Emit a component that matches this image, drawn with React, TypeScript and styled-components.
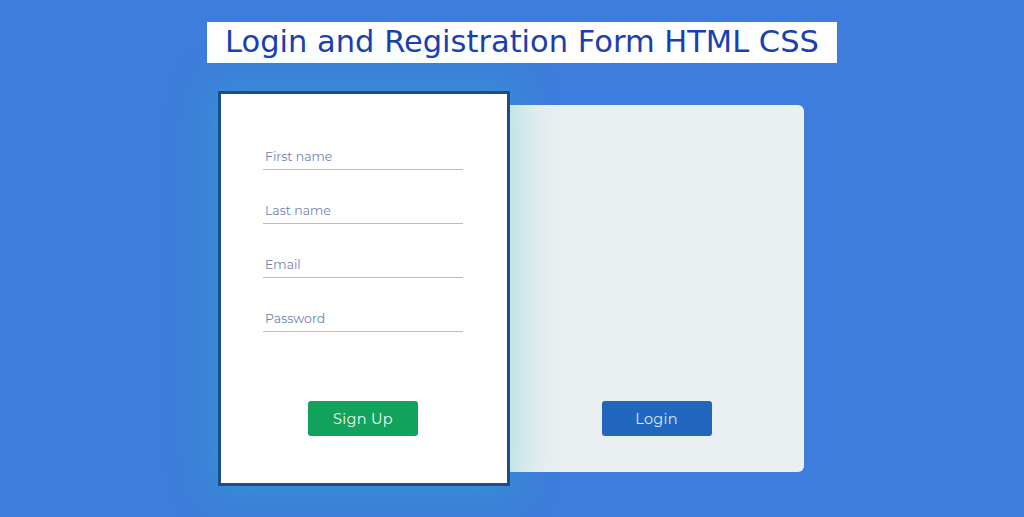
import React from "react";
import styled, { createGlobalStyle } from "styled-components";

const Global = createGlobalStyle`
  html, body { margin: 0; padding: 0; height: 100%; }
  body { background: #3d7ddb; font-family: "Montserrat", "Open Sans", sans-serif; }
  #root { height: 100%; }
`;

const Page = styled.div`
  height: 517px;
  display: flex;
  flex-direction: column;
  align-items: center;
  background: #3d7ddb;
  overflow: hidden;
`;

const TitleBox = styled.div`
  margin-top: 22px;
  margin-left: 20px;
  width: 630px;
  height: 41px;
  background: #ffffff;
  display: flex;
  align-items: center;
  justify-content: center;
  box-sizing: border-box;
`;

const Title = styled.h1`
  margin: 0;
  font-family: "DejaVu Sans", Verdana, sans-serif;
  font-weight: 400;
  font-size: 30.5px;
  line-height: 1;
  color: #1b3fae;
  white-space: nowrap;
  padding-bottom: 1px;
`;

const Stage = styled.div`
  margin-top: 28px;
  margin-left: -2px;
  display: flex;
  align-items: center;
  justify-content: center;
  width: 100%;
`;

const SignupCard = styled.form`
  position: relative;
  z-index: 2;
  width: 292px;
  height: 395px;
  box-sizing: border-box;
  background: #ffffff;
  border: 3px solid #1c4c8c;
  box-shadow: 0 0 40px 8px rgba(40, 190, 195, 0.32);
  display: flex;
  flex-direction: column;
  align-items: center;
  padding-top: 46px;
  padding-bottom: 47px;
  padding-right: 2px;
`;

const Fields = styled.div`
  display: flex;
  flex-direction: column;
  gap: 24px;
  width: 200px;
`;

const Field = styled.div`
  height: 30px;
  border-bottom: 1px solid #b9bcc4;
  display: flex;
  align-items: flex-end;
  padding-left: 2px;
  padding-bottom: 5px;
  box-sizing: border-box;
  font-size: 12.5px;
  color: #6f7fb3;
`;

const Spacer = styled.div`
  flex: 1;
`;

const Button = styled.button<{ $variant: "green" | "blue" }>`
  width: 110px;
  height: 35px;
  border: none;
  border-radius: 3px;
  font-family: "Montserrat", "Open Sans", sans-serif;
  font-size: 14.5px;
  letter-spacing: 0.3px;
  cursor: pointer;
  background: ${(p) => (p.$variant === "green" ? "#11a35b" : "#2167c0")};
  color: ${(p) => (p.$variant === "green" ? "#f2fbf5" : "#dbe7f7")};
`;

const LoginPanel = styled.div`
  position: relative;
  z-index: 1;
  margin-left: -5px;
  width: 299px;
  height: 367px;
  box-sizing: border-box;
  background: #eaeff1;
  border-radius: 0 6px 6px 0;
  display: flex;
  flex-direction: column;
  align-items: center;
  justify-content: flex-end;
  padding-bottom: 36px;
  padding-left: 4px;
`;

export default function App() {
  return (
    <>
      <Global />
      <Page>
        <TitleBox>
          <Title>Login and Registration Form HTML CSS</Title>
        </TitleBox>
        <Stage>
          <SignupCard onSubmit={(e) => e.preventDefault()}>
            <Fields>
              <Field>First name</Field>
              <Field>Last name</Field>
              <Field>Email</Field>
              <Field>Password</Field>
            </Fields>
            <Spacer />
            <Button type="button" $variant="green">Sign Up</Button>
          </SignupCard>
          <LoginPanel>
            <Button type="button" $variant="blue">Login</Button>
          </LoginPanel>
        </Stage>
      </Page>
    </>
  );
}
